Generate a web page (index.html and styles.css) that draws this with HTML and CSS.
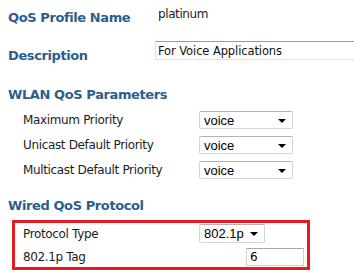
FILE: index.html
```html
<!DOCTYPE html>
<html lang="en">
<head>
    <meta charset="UTF-8">
    <meta name="viewport" content="width=device-width, initial-scale=1.0">
    <title>QoS Profile</title>
    <link rel="stylesheet" href="styles.css">
</head>
<body>
    <div id="profileForm">
        <div class="topRow firstRow">
            <div class="fieldTitle">QoS Profile Name</div>
            <div class="plainValue">platinum</div>
        </div>
        <div class="topRow secondRow">
            <div class="fieldTitle">Description</div>
            <input type="text" class="descInput" value="For Voice Applications">
        </div>

        <h3 class="sectionTitle wlanTitle">WLAN QoS Parameters</h3>
        <div class="paramList">
            <div class="paramRow">
                <label>Maximum Priority</label>
                <span class="selectWrap wide"><select><option>voice</option></select></span>
            </div>
            <div class="paramRow">
                <label>Unicast Default Priority</label>
                <span class="selectWrap wide"><select><option>voice</option></select></span>
            </div>
            <div class="paramRow">
                <label>Multicast Default Priority</label>
                <span class="selectWrap wide"><select><option>voice</option></select></span>
            </div>
        </div>

        <h3 class="sectionTitle wiredTitle">Wired QoS Protocol</h3>
        <div id="wiredBox">
            <div class="wiredRow">
                <label>Protocol Type</label>
                <span class="selectWrap narrow"><select><option>802.1p</option></select></span>
            </div>
            <div class="wiredRow">
                <label>802.1p Tag</label>
                <input type="text" class="tagInput" value="6">
            </div>
        </div>
    </div>
</body>
</html>
```

FILE: styles.css
```css
/* QoS profile edit page */
body {
    margin: 0;
    background-color: #fff;
    font-family: "DejaVu Sans", Verdana, sans-serif;
    font-size: 12px;
    color: #1c1c24;
    overflow: hidden;
}

#profileForm {
    padding-left: 8px;
}

.topRow {
    display: flex;
    align-items: flex-start;
    height: 36px;
}

.fieldTitle,
.sectionTitle {
    font-weight: bold;
    font-size: 13px;
    line-height: 16px;
    letter-spacing: -0.4px;
    color: #2b5e8c;
}

.fieldTitle {
    width: 147px;
    flex-shrink: 0;
}

.firstRow .fieldTitle {
    margin-top: 10px;
}

.plainValue {
    margin-top: 6px;
    padding-left: 3px;
    line-height: 16px;
    letter-spacing: -0.4px;
}

.secondRow .fieldTitle {
    margin-top: 12px;
}

.descInput {
    margin-top: 5px;
    width: 199px;
    height: 19px;
    box-sizing: border-box;
    padding: 0 2px;
    border: 1px solid #e0e0e0;
    border-top-color: #9a9a9a;
    border-right: none;
    font-family: "DejaVu Sans", Verdana, sans-serif;
    font-size: 11.5px;
    letter-spacing: -0.1px;
    color: #111;
    flex-shrink: 0;
}

.sectionTitle {
    margin: 0;
}

.wlanTitle {
    margin-top: 15px;
}

.paramList {
    display: flex;
    flex-direction: column;
    gap: 7px;
    margin-top: 8px;
    padding-left: 15px;
}

.paramRow,
.wiredRow {
    display: flex;
    align-items: center;
}

.paramRow label,
.wiredRow label {
    width: 176px;
    line-height: 18px;
    letter-spacing: -0.35px;
}

.selectWrap {
    position: relative;
    display: inline-block;
}

.selectWrap select {
    appearance: none;
    -webkit-appearance: none;
    box-sizing: border-box;
    margin: 0;
    padding: 0 0 0 4px;
    border: 1px solid #d4d4d4;
    border-top-color: #b4b4b4;
    border-radius: 2px;
    background-color: #fff;
    font-family: "Liberation Sans", Arial, sans-serif;
    font-size: 13px;
    color: #000;
}

.selectWrap::after {
    content: "";
    position: absolute;
    right: 7px;
    top: 8px;
    border-left: 4px solid transparent;
    border-right: 4px solid transparent;
    border-top: 4px solid #000;
}

.wide select {
    width: 94px;
    height: 18px;
}

.narrow select {
    width: 66px;
    height: 19px;
}

.wiredTitle {
    margin-top: 19px;
}

#wiredBox {
    margin: 6px 0 0 4px;
    width: 298px;
    box-sizing: border-box;
    border: 3px solid #e31b23;
    padding: 1px 3px 1px 8px;
    display: flex;
    flex-direction: column;
    gap: 5px;
}

.tagInput {
    margin-left: 47px;
    width: 58px;
    height: 18px;
    box-sizing: border-box;
    padding: 0 3px;
    border: 1px solid #d0d0d0;
    border-top-color: #a8a8a8;
    font-family: "DejaVu Sans", Verdana, sans-serif;
    font-size: 12px;
    color: #000;
}
```
